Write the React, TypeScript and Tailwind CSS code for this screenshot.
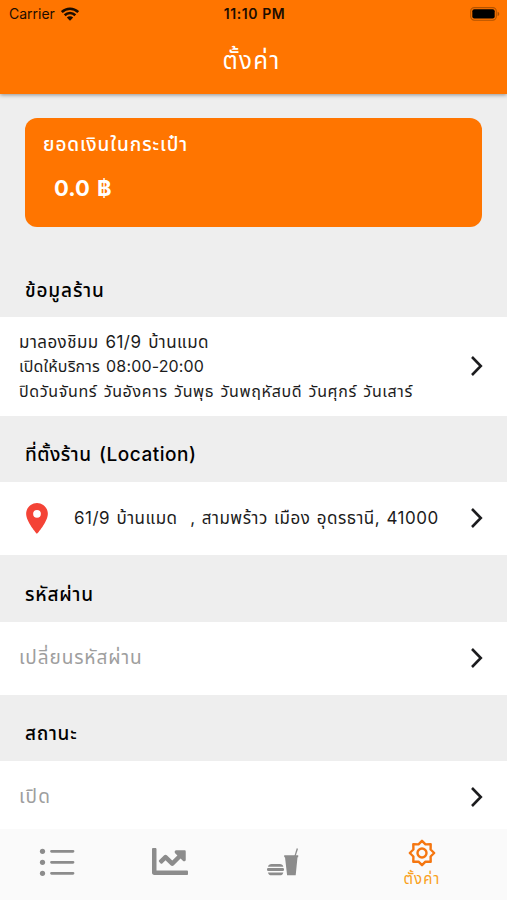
import type { ReactNode } from "react";

const FONT = "font-['Inter','Noto_Sans_Thai','Noto_Sans',sans-serif]";

function ChevronIcon() {
  return (
    <svg viewBox="0 0 14 22" className="mb-px h-[22px] w-[14px] shrink-0">
      <path d="M2 2 10.800 11 2 20" fill="none" stroke="#1c1c1e" strokeWidth="2.6" />
    </svg>
  );
}

function WifiIcon() {
  return (
    <svg viewBox="0 0 18 14" className="h-[14px] w-[18px]">
      <g fill="none" stroke="#1c0d00" strokeWidth="2.6">
        <path d="M.8 5.1C5.4.6 12.6.6 17.2 5.1" />
        <path d="M3.7 8.2c3-2.9 7.6-2.9 10.6 0" />
      </g>
      <path d="M5.8 10.6c1.8-1.8 4.6-1.8 6.4 0L9 13.8z" fill="#1c0d00" />
    </svg>
  );
}

function BatteryIcon() {
  return (
    <svg viewBox="0 0 30 14" className="h-[14px] w-[30px]">
      <rect x=".7" y=".6" width="25.6" height="12.6" rx="3.6" fill="none" stroke="#b35300" strokeWidth="1.1" />
      <rect x="2.3" y="2.2" width="22.4" height="9.4" rx="2" fill="#000" />
      <path d="M27.6 4.7c2.2.7 2.2 3.7 0 4.4z" fill="#a84d00" />
    </svg>
  );
}

function PinIcon() {
  return (
    <svg viewBox="5 2 14 20" className="h-[31px] w-[22px] shrink-0">
      <path
        d="M12 2C8.13 2 5 5.13 5 9c0 5.25 7 13 7 13s7-7.75 7-13c0-3.87-3.13-7-7-7zm0 9.5a2.5 2.5 0 0 1 0-5 2.5 2.5 0 0 1 0 5z"
        fill="#f44336"
      />
    </svg>
  );
}

function ListIcon() {
  return (
    <svg viewBox="0 0 36 28" className="h-7 w-9">
      <g fill="#8c8c8c">
        <circle cx="3.5" cy="3.300" r="2.6" />
        <circle cx="3.5" cy="14.300" r="2.6" />
        <circle cx="3.5" cy="25.300" r="2.6" />
      </g>
      <path d="M12.500 3.300h21.500M12.500 14.300h21.500M12.500 25.300h21.500" stroke="#8c8c8c" strokeWidth="2.8" strokeLinecap="round" />
    </svg>
  );
}

function ChartIcon() {
  return (
    <svg viewBox="0 64 512 384" className="h-[27px] w-9">
      <path
        fill="#8c8c8c"
        d="M496 384H64V80c0-8.84-7.16-16-16-16H16C7.16 64 0 71.16 0 80v336c0 17.67 14.33 32 32 32h464c8.84 0 16-7.16 16-16v-32c0-8.84-7.16-16-16-16zM464 96H345.94c-21.38 0-32.09 25.85-16.97 40.97l32.4 32.4L288 242.75l-73.37-73.37c-12.5-12.5-32.76-12.5-45.25 0l-68.69 68.69c-6.25 6.25-6.25 16.38 0 22.63l22.62 22.62c6.25 6.25 16.38 6.25 22.63 0L192 237.25l73.37 73.37c12.5 12.5 32.76 12.5 45.25 0l96-96 32.4 32.4c15.12 15.12 40.97 4.41 40.97-16.97V112c.01-8.84-7.15-16-15.99-16z"
      />
    </svg>
  );
}

function FoodIcon() {
  return (
    <svg viewBox="0 0 32 28" className="h-7 w-8">
      <g fill="#8c8c8c">
        <path d="M17.2 7.3h14v1.900h-.7L28.7 27.200h-8.600L18 9.200h-.8z" />
        <path d="M27.4 8 29.7.3l1.300.5-2.300 7.200z" />
        <path d="M1 18.700c.3-1.900 1.700-2.700 3.500-2.700h8.300c1.800 0 3.200.8 3.500 2.700z" />
        <rect x="0" y="20.100" width="17" height="2.800" rx="1.200" />
        <path d="M1 24.400h15.300c-.3 2-1.700 2.800-3.500 2.800H4.500c-1.800 0-3.200-.8-3.500-2.800z" />
      </g>
    </svg>
  );
}

function GearIcon() {
  return (
    <svg viewBox="-14 -14 28 28" className="h-7 w-7">
      <g fill="none" stroke="#f57610" strokeWidth="2.4" strokeLinejoin="round">
        <path d="M0-12.2 3.5-8.6 8.7-8.7 8.6-3.5 12.2 0 8.6 3.5 8.7 8.7 3.5 8.6 0 12.2-3.5 8.6-8.7 8.7-8.6 3.5-12.2 0-8.6-3.5-8.7-8.7-3.5-8.6z" />
        <circle r="4.5" />
      </g>
    </svg>
  );
}

function SectionTitle({ className, children }: { className: string; children: ReactNode }) {
  return (
    <h2 className={`flex shrink-0 items-center pl-[25px] text-[19px] font-medium text-black ${className}`}>
      {children}
    </h2>
  );
}

function Row({ className, children }: { className: string; children: ReactNode }) {
  return (
    <div className={`flex shrink-0 items-center justify-between bg-white pr-[23px] pl-[19px] ${className}`}>
      {children}
      <ChevronIcon />
    </div>
  );
}

export default function App() {
  return (
    <div className={`flex h-[900px] w-[507px] flex-col overflow-hidden bg-[#eeeeee] whitespace-pre ${FONT}`}>
      <header className="z-10 flex h-[94px] shrink-0 flex-col bg-[#ff7500] shadow-[0_1px_4px_rgba(0,0,0,0.4)]">
        <div className="grid h-[27px] grid-cols-3 items-center pr-[7px] pl-[9px] text-[14px] text-[#1c0d00]">
          <div className="flex items-center gap-[6px]">
            <span>Carrier</span>
            <WifiIcon />
          </div>
          <span className="text-center font-semibold tracking-[0.6px]">11:10 PM</span>
          <div className="flex justify-end">
            <BatteryIcon />
          </div>
        </div>
        <h1 className="flex h-[67px] items-center justify-center pr-1 text-[24px] tracking-[1.4px] text-white">ตั้งค่า</h1>
      </header>

      <main className="flex min-h-0 flex-1 flex-col">
        <section className="mx-[25px] mt-6 flex h-[109px] shrink-0 flex-col rounded-xl bg-[#ff7500] pt-[13px] pl-[18px] text-white">
          <p className="text-[19px] leading-7 font-medium tracking-[0.95px]">ยอดเงินในกระเป๋า</p>
          <p className="mt-[13px] pl-[11px] text-[22px] leading-8 font-bold [word-spacing:2px]">0.0 ฿</p>
        </section>

        <SectionTitle className="mt-[35px] h-[55px] pt-[3px] tracking-[0.85px]">ข้อมูลร้าน</SectionTitle>
        <Row className="h-[99px]">
          <div className="text-[17px] leading-[24.5px] text-[#1c1c1c]">
            <p className="tracking-[0.45px] [word-spacing:1.5px]">มาลองชิมม 61/9 บ้านแมด</p>
            <p className="text-[16px] tracking-[0.15px] [word-spacing:1.5px]">เปิดให้บริการ 08:00-20:00</p>
            <p className="text-[16px] tracking-[0.65px] [word-spacing:1.2px]">ปิดวันจันทร์ วันอังคาร วันพุธ วันพฤหัสบดี วันศุกร์ วันเสาร์</p>
          </div>
        </Row>

        <SectionTitle className="h-[66px] pt-[13px] tracking-[0.5px] [word-spacing:2px]">ที่ตั้งร้าน (Location)</SectionTitle>
        <Row className="h-[73px]">
          <div className="flex flex-1 items-center gap-[26px] pl-[7px]">
            <PinIcon />
            <p className="text-[17px] tracking-[0.5px] text-[#1c1c1c] [word-spacing:1px]">61/9 บ้านแมด  , สามพร้าว เมือง อุดรธานี, 41000</p>
          </div>
        </Row>

        <SectionTitle className="h-[67px] pt-[13px] tracking-[0.8px]">รหัสผ่าน</SectionTitle>
        <Row className="h-[73px]">
          <p className="text-[19px] tracking-[0.9px] text-[#9e9e9e]">เปลี่ยนรหัสผ่าน</p>
        </Row>

        <SectionTitle className="h-[66px] pt-3 tracking-[0.7px]">สถานะ</SectionTitle>
        <Row className="h-[73px]">
          <p className="text-[19px] tracking-[1.2px] text-[#9e9e9e]">เปิด</p>
        </Row>
      </main>

      <nav className="z-10 grid h-[71px] shrink-0 grid-cols-[114px_111px_115px_164px] bg-[#fafafa]">
        <div className="flex justify-center pt-[19px]">
          <ListIcon />
        </div>
        <div className="flex justify-center pt-[19px]">
          <ChartIcon />
        </div>
        <div className="flex justify-center pt-[19px]">
          <FoodIcon />
        </div>
        <div className="flex flex-col items-center pt-[10px] text-[#f9a01b]">
          <GearIcon />
          <span className="text-[15px] leading-[24px] tracking-[1px]">ตั้งค่า</span>
        </div>
      </nav>
    </div>
  );
}
